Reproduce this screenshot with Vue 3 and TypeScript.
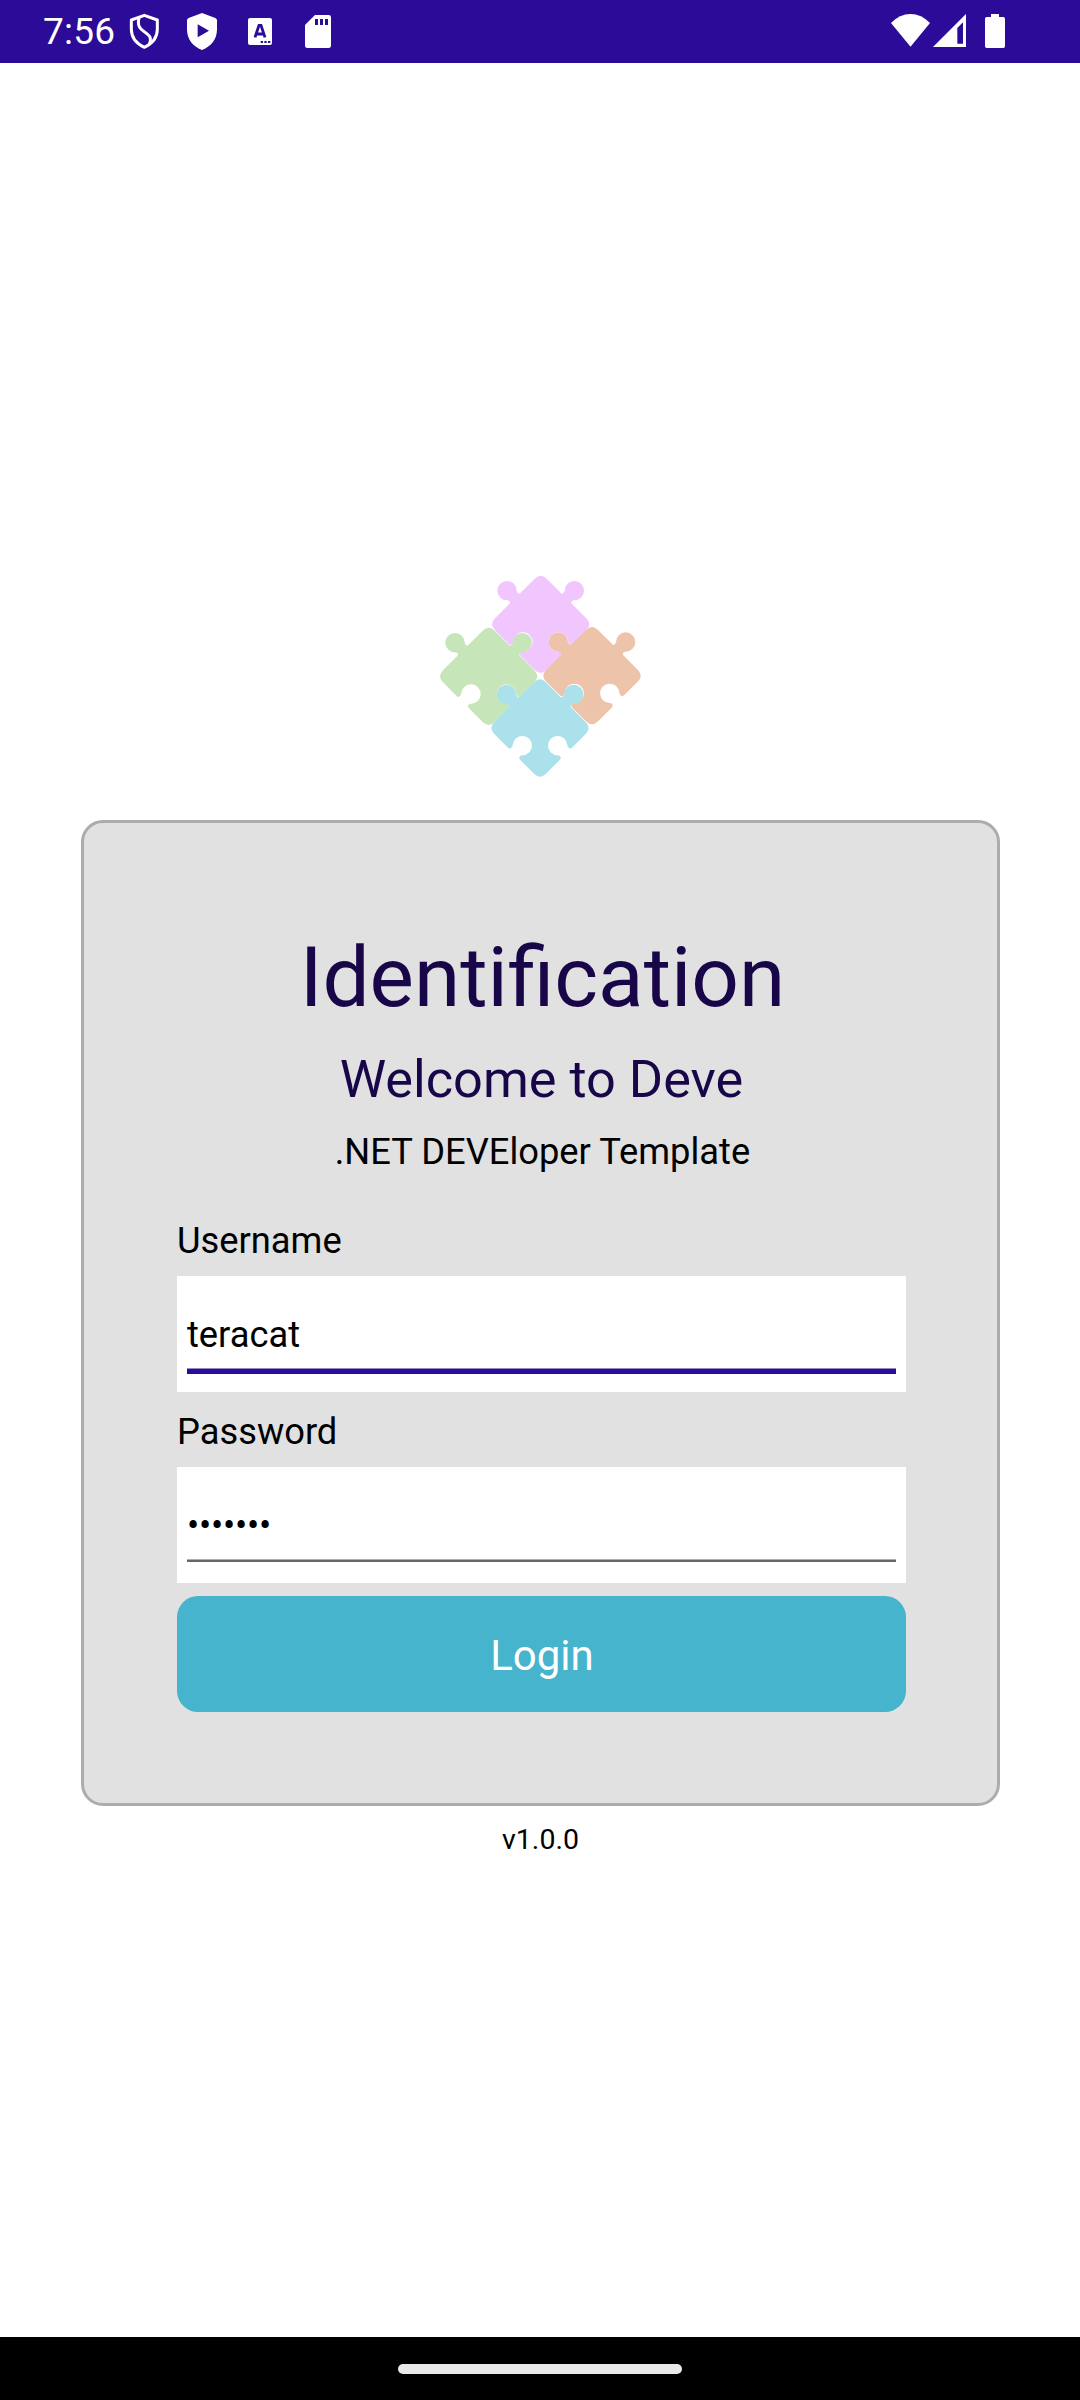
<script setup lang="ts">
import { ref } from 'vue'

interface Piece {
  x: number
  y: number
  color: string
}

const username = ref('teracat')
const password = ref('•••••••')

const pieces: Piece[] = [
  { x: 332, y: 178, color: '#f1c6fe' },
  { x: 176, y: 334, color: '#c6e5b8' },
  { x: 486, y: 332, color: '#edc3a9' },
  { x: 330, y: 489, color: '#aae1ea' },
]

// One jigsaw piece around its own centre: knobs on the two upper sides, sockets on the two lower sides.
const piecePath =
  'M-18-137Q0-155 18-137L61-94Q65-90 68-94Q72-98 72-101A29 29 0 1 1 101-72Q97-72 94-69Q90-66 94-61L137-18' +
  'Q155 0 137 18L96 59Q91 64 87 60Q82 56 82 51A29 29 0 1 0 53 82Q58 82 61 86Q64 91 59 96L18 137' +
  'Q0 155-18 137L-59 96Q-64 91-61 86Q-58 82-53 82A29 29 0 1 0-82 51Q-82 56-87 60Q-91 64-96 59L-137 18' +
  'Q-155 0-137-18L-94-61Q-90-66-94-69Q-97-72-101-72A29 29 0 1 1-72-101Q-72-98-68-94Q-65-90-61-94Z'
</script>

<template>
  <div class="screen">
    <header class="status">
      <span class="time">7:56</span>
      <svg class="left-icons" viewBox="384 0 616 189" width="205.33" height="63">
        <g fill="none" stroke="#fff" stroke-width="9" stroke-linejoin="round">
          <path d="M433 46L472 60V88Q472 124 433 142Q394 124 394 88V60Z" />
          <path d="M417 53Q411 78 424 88L443 103Q457 114 448 132" />
        </g>
        <path
          fill="#fff"
          fill-rule="evenodd"
          d="M606 39L646 54Q651 56 651 61V88C651 118 634 139 606 150C578 139 561 118 561 88V61Q561 56 566 54ZM593 73V112L627 92Z"
        />
        <rect x="744" y="54" width="72" height="81" rx="6" fill="#fff" />
        <path d="M765 112L777 76H783L795 112M770 102H790" fill="none" stroke="#2b0b98" stroke-width="8.500" />
        <path d="M782 123h7v6h-7zM793 123h7v6h-7zM804 123h7v6h-7z" fill="#2b0b98" />
        <path
          fill="#fff"
          fill-rule="evenodd"
          d="M945 45H986Q993 45 993 52V137Q993 144 986 144H922Q915 144 915 137V75ZM945 57V75H954V57ZM960 57V75H969V57ZM975 57V75H984V57Z"
        />
      </svg>
      <svg class="right-icons" viewBox="90 0 350 189" width="116.67" height="63">
        <path d="M93 69Q119 42 151.500 42T210 69L151.500 140Z" fill="#fff" />
        <path fill="#fff" fill-rule="evenodd" d="M318 42V141H219ZM309 67L292 84V131H309Z" />
        <path d="M393 42H417V51H430Q435 51 435 56V139Q435 144 430 144H380Q375 144 375 139V56Q375 51 380 51H393Z" fill="#fff" />
      </svg>
    </header>

    <main class="content">
      <svg class="logo" viewBox="0 0 660 660" width="220" height="220">
        <path
          v-for="piece in pieces"
          :key="piece.color"
          :d="piecePath"
          :fill="piece.color"
          :transform="`translate(${piece.x} ${piece.y})`"
        />
      </svg>

      <form class="card" @submit.prevent>
        <h1 class="title">Identification</h1>
        <h2 class="welcome">Welcome to Deve</h2>
        <p class="tagline">.NET DEVEloper Template</p>

        <label class="label first" for="username">Username</label>
        <div class="field focused">
          <input id="username" v-model="username" type="text" autocomplete="off" spellcheck="false" />
        </div>

        <label class="label" for="password">Password</label>
        <div class="field">
          <input id="password" v-model="password" class="masked" type="text" autocomplete="off" spellcheck="false" />
        </div>

        <button class="login" type="submit">Login</button>
      </form>

      <p class="version">v1.0.0</p>
    </main>

    <footer class="nav"><span class="handle"></span></footer>
  </div>
</template>

<style>
body {
  margin: 0;
  background: #fff;
}
</style>

<style scoped>
.screen {
  display: flex;
  flex-direction: column;
  width: 1080px;
  height: 2400px;
  background: #fff;
  color: #000;
  font-family: Roboto, sans-serif;
  font-size: 36.3px;
  line-height: 44px;
}

.status {
  display: flex;
  flex: none;
  align-items: flex-start;
  box-sizing: border-box;
  height: 63px;
  padding: 0 73px 0 43px;
  background: #2b0b98;
}

.time {
  width: 85px;
  padding-top: 10px;
  color: #fff;
  font-size: 37px;
  letter-spacing: 0.2px;
}

.right-icons {
  margin-left: auto;
}

.content {
  display: flex;
  flex: 1;
  flex-direction: column;
  align-items: center;
  padding-top: 502px;
}

.logo {
  flex: none;
  margin-bottom: 35px;
}

.card {
  display: flex;
  flex: none;
  flex-direction: column;
  box-sizing: border-box;
  width: 919px;
  height: 986px;
  margin-left: 1px;
  padding: 105px 91px 91px 93px;
  border: 3px solid #acacac;
  border-radius: 22px;
  background: #e1e1e1;
}

.title,
.welcome,
.tagline,
.version {
  margin: 0;
  font-weight: 400;
  text-align: center;
}

.title {
  padding-left: 2px;
  color: #190649;
  font-size: 83.7px;
  line-height: 98px;
}

.welcome {
  margin-top: 22px;
  color: #190649;
  font-size: 52.3px;
  line-height: 62px;
}

.tagline {
  margin-top: 20px;
  padding-left: 2px;
}

.label {
  margin: 18px 0 13px;
}

.label.first {
  margin-top: 45px;
}

.field {
  display: flex;
  flex: none;
  flex-direction: column;
  box-sizing: border-box;
  height: 116px;
  padding: 37px 10px 0;
  background: #fff;
}

.field input {
  box-sizing: border-box;
  width: 100%;
  height: 44px;
  padding: 0;
  border: 0;
  outline: 0;
  background: none;
  color: #000;
  font: inherit;
}

.field .masked {
  letter-spacing: -0.25px;
}

.field::after {
  content: '';
  height: 2px;
  margin-top: 11px;
  border-top: 1px solid #b0b0b0;
  background: #666;
}

.field.focused::after {
  height: 5px;
  border-top-color: #9585cc;
  background: #2b0b98;
}

.login {
  height: 116px;
  margin-top: 13px;
  padding: 3px 0 0 1px;
  border: 0;
  border-radius: 21px;
  background: #45b4cc;
  color: #fff;
  font: 42px/113px Roboto, sans-serif;
}

.version {
  margin-top: 16px;
  padding-left: 1px;
  font-size: 28.5px;
  line-height: 36px;
}

.nav {
  display: flex;
  flex: none;
  justify-content: center;
  height: 63px;
  background: #000;
}

.handle {
  width: 284px;
  height: 10px;
  margin-top: 27px;
  border-radius: 5px;
  background: #eaeaea;
}
</style>
